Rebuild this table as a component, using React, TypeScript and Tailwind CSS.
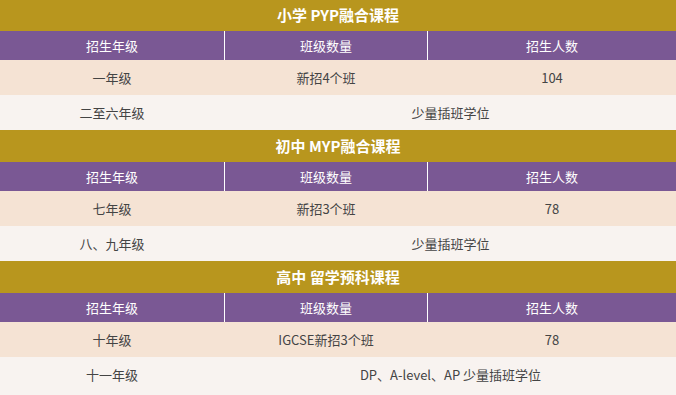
const sections = [
  {
    title: "小学 PYP融合课程",
    grade: "一年级",
    classes: "新招4个班",
    count: "104",
    otherGrade: "二至六年级",
    otherNote: "少量插班学位",
  },
  {
    title: "初中 MYP融合课程",
    grade: "七年级",
    classes: "新招3个班",
    count: "78",
    otherGrade: "八、九年级",
    otherNote: "少量插班学位",
  },
  {
    title: "高中 留学预科课程",
    grade: "十年级",
    classes: "IGCSE新招3个班",
    count: "78",
    otherGrade: "十一年级",
    otherNote: "DP、A-level、AP 少量插班学位",
  },
];

const cols = "grid grid-cols-[224px_203px_1fr]";

function Section({ s, first }: { s: (typeof sections)[number]; first: boolean }) {
  return (
    <div>
      <div
        className={`flex ${first ? "h-[31px]" : "h-[32px]"} items-center justify-center bg-[#b8961e] text-[15px] font-bold text-white`}
      >
        {s.title}
      </div>
      <div className={`${cols} h-[29px] bg-[#7a5894] text-[13px] text-white`}>
        <div className="flex items-center justify-center">招生年级</div>
        <div className="flex items-center justify-center border-l border-white">班级数量</div>
        <div className="flex items-center justify-center border-l border-white">招生人数</div>
      </div>
      <div className={`${cols} h-[35px] bg-[#f5e3d4] text-[13px] text-[#444]`}>
        <div className="flex items-center justify-center">{s.grade}</div>
        <div className="flex items-center justify-center pl-px">{s.classes}</div>
        <div className="flex items-center justify-center pl-px">{s.count}</div>
      </div>
      <div className={`${cols} h-[35px] bg-[#f8f3f0] text-[13px] text-[#444]`}>
        <div className="flex items-center justify-center">{s.otherGrade}</div>
        <div className="col-span-2 flex items-center justify-center pl-px">{s.otherNote}</div>
      </div>
    </div>
  );
}

export default function App() {
  return (
    <div
      className="h-[395px] w-[676px] overflow-hidden bg-[#f8f3f0]"
      style={{ fontFamily: '"Noto Sans CJK SC", "Noto Sans", sans-serif' }}
    >
      {sections.map((s, i) => (
        <Section key={s.title} s={s} first={i === 0} />
      ))}
    </div>
  );
}
